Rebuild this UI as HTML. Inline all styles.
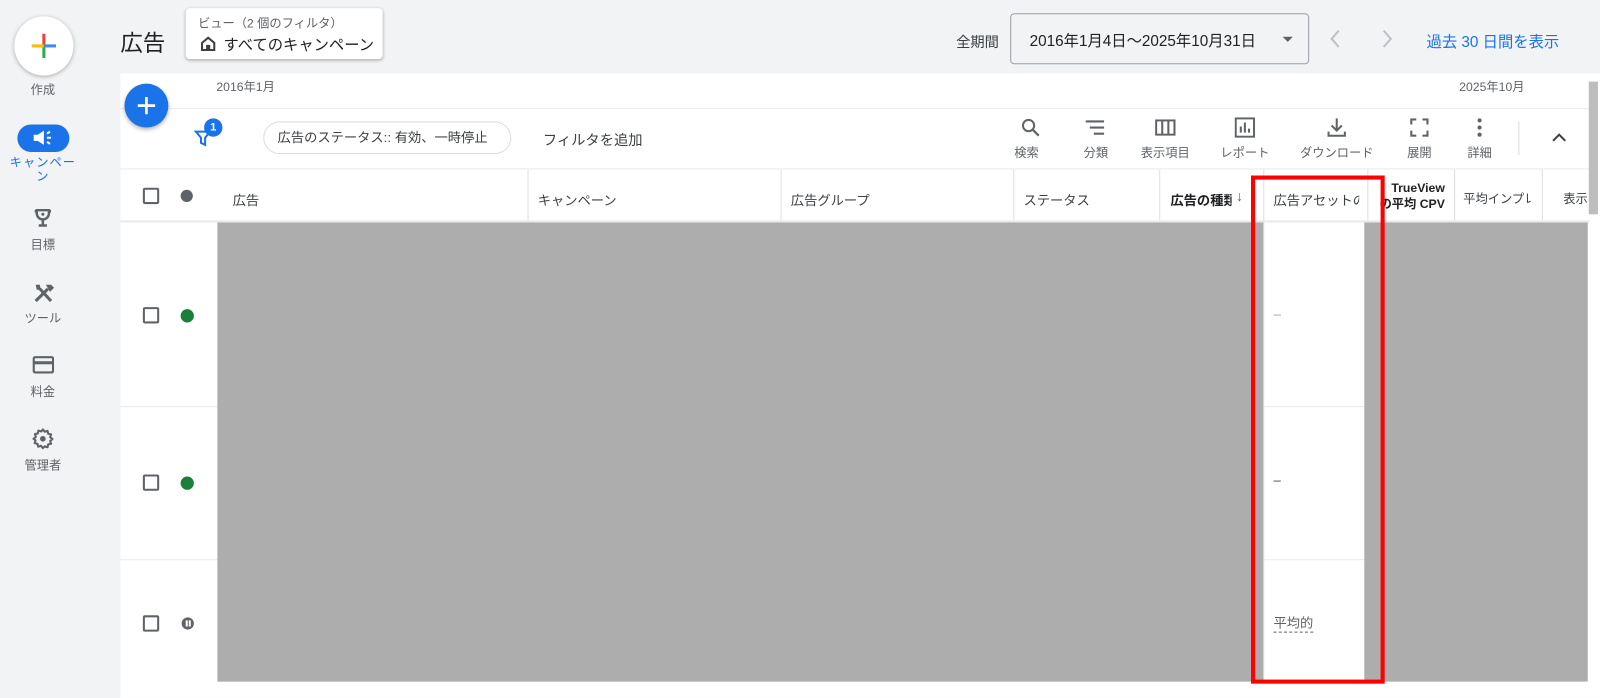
<!DOCTYPE html>
<html><head><meta charset="utf-8"><style>
*{box-sizing:border-box;margin:0;padding:0}
body{width:1600px;height:684px;overflow:hidden;background:#f1f3f4;font-family:"Liberation Sans","Noto Sans CJK JP",sans-serif;color:#3c4043;position:relative}
#w{position:absolute;left:0;top:0;width:1568px;height:671px;transform:scale(1.0204);transform-origin:0 0}
.a{position:absolute}
.nav{font-size:12px;color:#5f6368;text-align:center;width:84px;left:0}
.cb{width:16px;height:16px;border:2px solid #5f6368;border-radius:2px}
.th{font-size:13px;color:#3c4043;top:186px}
.tool{font-size:12px;color:#5f6368;text-align:center;top:141px}
.vl{width:1px;background:#e0e0e0}
</style></head><body><div id="w">
<div class="a" style="left:14px;top:16px;width:58px;height:58px;border-radius:50%;background:#fff;box-shadow:0 1px 4px rgba(0,0,0,.3)">
<svg class="a" style="left:17px;top:17px" width="24" height="24"><rect x="10.5" y="0" width="3" height="12" fill="#ea4335"/><rect x="12" y="10.5" width="12" height="3" fill="#4285f4"/><rect x="10.5" y="12" width="3" height="12" fill="#34a853"/><rect x="0" y="10.5" width="12" height="3" fill="#fbbc04"/></svg></div>
<div class="a nav" style="top:79px">作成</div>
<div class="a" style="left:17px;top:122px;width:51px;height:27px;border-radius:14px;background:#1a73e8"></div>
<svg class="a" style="left:31px;top:126px" width="22" height="18" viewBox="0 0 22 18"><path d="M2 6h4l6-4v14l-6-4H2z" fill="#fff"/><path d="M15 5l3-2M15 9h4M15 13l3 2" stroke="#fff" stroke-width="2"/></svg>
<div class="a nav" style="top:152px;color:#1a73e8;line-height:14px;letter-spacing:1px">キャンペー<br>ン</div>
<svg class="a" style="left:32px;top:204px" width="20" height="20" viewBox="0 0 20 20"><path d="M4 2h12v3a6 6 0 0 1-12 0z" fill="none" stroke="#5f6368" stroke-width="2.4"/><circle cx="10" cy="6" r="1.5" fill="#5f6368"/><path d="M10 11v5M6 17h8M2 3h2M16 3h2" stroke="#5f6368" stroke-width="2.4"/></svg>
<div class="a nav" style="top:231px">目標</div>
<svg class="a" style="left:32px;top:277px" width="22" height="20" viewBox="0 0 22 20"><path d="M3 18L15 6M7 6l11 12" stroke="#5f6368" stroke-width="3"/><path d="M13 2l5 0 3 3-4 4" fill="#5f6368"/><path d="M3 2l4 0 1 5-4 0z" fill="#5f6368"/></svg>
<div class="a nav" style="top:303px">ツール</div>
<svg class="a" style="left:32px;top:349px" width="21" height="17"><rect x="1" y="1" width="19" height="15" rx="1.5" fill="none" stroke="#5f6368" stroke-width="2.2"/><rect x="1" y="5" width="19" height="3" fill="#5f6368"/></svg>
<div class="a nav" style="top:375px">料金</div>
<svg class="a" style="left:31px;top:419px" width="22" height="22" viewBox="0 0 24 24"><path d="M12 2l2 2.5 3-1 .7 3.1 3.1.7-1 3 2.5 2-2.5 2 1 3-3.1.7-.7 3.1-3-1L12 22l-2-2.5-3 1-.7-3.1-3.1-.7 1-3L2 12l2.5-2-1-3 3.1-.7L7.3 3.2l3 1z" fill="none" stroke="#5f6368" stroke-width="2.2" stroke-linejoin="round"/><circle cx="12" cy="12" r="3" fill="#5f6368"/></svg>
<div class="a nav" style="top:447px">管理者</div>

<div class="a" style="left:118px;top:25px;font-size:22px;color:#202124">広告</div>
<div class="a" style="left:182px;top:8px;width:193px;height:50px;background:#fff;border-radius:4px;box-shadow:0 1px 3px rgba(0,0,0,.3)">
<div class="a" style="left:12px;top:6px;font-size:12px;color:#5f6368">ビュー（2 個のフィルタ）</div>
<svg class="a" style="left:14px;top:27px" width="16" height="16" viewBox="0 0 16 16"><path d="M2 7L8 2l6 5v7H2z" fill="none" stroke="#3c4043" stroke-width="2"/><rect x="6" y="9" width="4" height="5" fill="#3c4043"/></svg>
<div class="a" style="left:37px;top:25px;font-size:15px;color:#202124">すべてのキャンペーン</div></div>
<div class="a" style="left:937px;top:31px;font-size:14px;color:#3c4043">全期間</div>
<div class="a" style="left:990px;top:13px;width:293px;height:50px;border:1px solid #9aa0a6;border-radius:4px">
<div class="a" style="left:18px;top:15px;font-size:15px;color:#202124">2016年1月4日〜2025年10月31日</div>
<div class="a" style="left:266px;top:22px;border:5px solid transparent;border-top-color:#5f6368;border-bottom:0"></div></div>
<svg class="a" style="left:1302px;top:28px" width="14" height="20"><path d="M10 2L3 10l7 8" fill="none" stroke="#bdc1c6" stroke-width="2"/></svg>
<svg class="a" style="left:1352px;top:28px" width="14" height="20"><path d="M4 2l7 8-7 8" fill="none" stroke="#bdc1c6" stroke-width="2"/></svg>
<div class="a" style="left:1398px;top:30px;font-size:15px;color:#1a73e8">過去 30 日間を表示</div>

<div class="a" style="left:118px;top:72px;width:1450px;height:612px;background:#fff"></div>
<div class="a" style="left:212px;top:76px;font-size:12px;color:#5f6368">2016年1月</div>
<div class="a" style="left:1430px;top:76px;font-size:12px;color:#5f6368">2025年10月</div>
<div class="a" style="left:118px;top:106px;width:1440px;height:1px;background:#e8eaed"></div>
<div class="a" style="left:122px;top:82px;width:43px;height:43px;border-radius:50%;background:#1a73e8;box-shadow:0 2px 4px rgba(0,0,0,.3)">
<svg class="a" style="left:12px;top:12px" width="19" height="19"><path d="M9.5 1v17M1 9.5h17" stroke="#fff" stroke-width="2.6"/></svg></div>
<svg class="a" style="left:190px;top:126px" width="18" height="18"><path d="M2 3h14l-5 6v7l-4-2V9z" fill="none" stroke="#1a73e8" stroke-width="2"/></svg>
<div class="a" style="left:200px;top:116px;width:18px;height:18px;border-radius:50%;background:#1a73e8;color:#fff;font-size:11px;font-weight:bold;text-align:center;line-height:18px">1</div>
<div class="a" style="left:258px;top:119px;width:243px;height:32px;border:1px solid #dadce0;border-radius:16px;font-size:13px;color:#3c4043;line-height:30px;padding-left:13px">広告のステータス:: 有効、一時停止</div>
<div class="a" style="left:532px;top:127px;font-size:14px;color:#3c4043">フィルタを追加</div>

<svg class="a" style="left:1000px;top:115px" width="20" height="20"><circle cx="8" cy="8" r="5.5" fill="none" stroke="#5f6368" stroke-width="2"/><path d="M12 12l6 6" stroke="#5f6368" stroke-width="2.2"/></svg>
<div class="a tool" style="left:986px;width:40px">検索</div>
<svg class="a" style="left:1063px;top:117px" width="20" height="16"><path d="M1 2h18M5 8h14M9 14h10" stroke="#5f6368" stroke-width="2"/></svg>
<div class="a tool" style="left:1054px;width:40px">分類</div>
<svg class="a" style="left:1132px;top:117px" width="20" height="16"><rect x="1" y="1" width="18" height="14" fill="none" stroke="#5f6368" stroke-width="2"/><path d="M7 1v14M13 1v14" stroke="#5f6368" stroke-width="2"/></svg>
<div class="a tool" style="left:1112px;width:60px">表示項目</div>
<svg class="a" style="left:1210px;top:115px" width="20" height="20"><rect x="1" y="1" width="18" height="18" fill="none" stroke="#5f6368" stroke-width="2"/><path d="M6 15V9M10 15V5M14 15v-4" stroke="#5f6368" stroke-width="2"/></svg>
<div class="a tool" style="left:1190px;width:60px">レポート</div>
<svg class="a" style="left:1300px;top:115px" width="20" height="20"><path d="M10 1v12M5 8l5 5 5-5M2 14v4h16v-4" fill="none" stroke="#5f6368" stroke-width="2"/></svg>
<div class="a tool" style="left:1265px;width:90px">ダウンロード</div>
<svg class="a" style="left:1382px;top:116px" width="18" height="18"><path d="M1 6V1h5M12 1h5v5M17 12v5h-5M6 17H1v-5" fill="none" stroke="#5f6368" stroke-width="2.2"/></svg>
<div class="a tool" style="left:1371px;width:40px">展開</div>
<svg class="a" style="left:1446px;top:115px" width="8" height="20"><circle cx="4" cy="3" r="2" fill="#5f6368"/><circle cx="4" cy="10" r="2" fill="#5f6368"/><circle cx="4" cy="17" r="2" fill="#5f6368"/></svg>
<div class="a tool" style="left:1430px;width:40px">詳細</div>
<div class="a" style="left:1488px;top:119px;width:1px;height:33px;background:#dadce0"></div>
<svg class="a" style="left:1520px;top:130px" width="16" height="10"><path d="M2 8l6-6 6 6" fill="none" stroke="#3c4043" stroke-width="2"/></svg>
<div class="a" style="left:118px;top:165px;width:1440px;height:1px;background:#e8eaed"></div>

<div class="a cb" style="left:140px;top:184px"></div>
<div class="a" style="left:177px;top:186px;width:12px;height:12px;border-radius:50%;background:#5f6368"></div>
<div class="a th" style="left:228px">広告</div>
<div class="a vl" style="left:517px;top:166px;height:51px"></div>
<div class="a th" style="left:527px">キャンペーン</div>
<div class="a vl" style="left:765px;top:166px;height:51px"></div>
<div class="a th" style="left:775px">広告グループ</div>
<div class="a vl" style="left:993px;top:166px;height:51px"></div>
<div class="a th" style="left:1003px">ステータス</div>
<div class="a vl" style="left:1136px;top:166px;height:51px"></div>
<div class="a th" style="left:1147px;font-weight:bold;color:#202124;width:60px;overflow:hidden;white-space:nowrap">広告の種類</div>
<div class="a" style="left:1211px;top:184px;font-size:14px;color:#5f6368">↓</div>
<div class="a vl" style="left:1238px;top:166px;height:502px"></div>
<div class="a th" style="left:1248px;width:84px;overflow:hidden;white-space:nowrap">広告アセットの</div>
<div class="a vl" style="left:1340px;top:166px;height:51px"></div>
<div class="a" style="left:1346px;top:176px;font-size:12px;font-weight:bold;color:#202124;text-align:right;width:70px;line-height:16px">TrueView<br>の平均 CPV</div>
<div class="a vl" style="left:1425px;top:166px;height:51px"></div>
<div class="a th" style="left:1434px;font-size:12px;width:66px;overflow:hidden;white-space:nowrap">平均インプレ</div>
<div class="a vl" style="left:1511px;top:166px;height:51px"></div>
<div class="a th" style="left:1532px;font-size:12px;width:24px;overflow:hidden;white-space:nowrap">表示</div>
<div class="a" style="left:118px;top:216px;width:1440px;height:2px;background:#e8eaed"></div>

<div class="a" style="left:118px;top:398px;width:1220px;height:1px;background:#e8eaed"></div>
<div class="a" style="left:118px;top:548px;width:1220px;height:1px;background:#e8eaed"></div>
<div class="a cb" style="left:140px;top:301px"></div>
<div class="a" style="left:177px;top:303px;width:13px;height:13px;border-radius:50%;background:#188038"></div>
<div class="a cb" style="left:140px;top:465px"></div>
<div class="a" style="left:177px;top:467px;width:13px;height:13px;border-radius:50%;background:#188038"></div>
<div class="a cb" style="left:140px;top:603px"></div>
<div class="a" style="left:178px;top:605px;width:12px;height:12px;border-radius:50%;background:#5f6368"></div>
<div class="a" style="left:182px;top:608px;width:1.5px;height:6px;background:#fff"></div><div class="a" style="left:185px;top:608px;width:1.5px;height:6px;background:#fff"></div>
<div class="a" style="left:1248px;top:300px;font-size:13px;color:#9aa0a6">–</div>
<div class="a" style="left:1248px;top:463px;font-size:13px;color:#3c4043">–</div>
<div class="a" style="left:1248px;top:603px;font-size:13px;color:#5f6368;border-bottom:1px dashed #5f6368;line-height:16px">平均的</div>

<div class="a" style="left:213px;top:218px;width:1025px;height:450px;background:#adadad"></div>
<div class="a" style="left:1337px;top:218px;width:219px;height:450px;background:#adadad"></div>
<div class="a" style="left:1557px;top:80px;width:9px;height:130px;background:#bdbdbd"></div>
<div class="a" style="left:1226px;top:172px;width:131px;height:498px;border:4px solid #ff0000"></div>
</div></body></html>
